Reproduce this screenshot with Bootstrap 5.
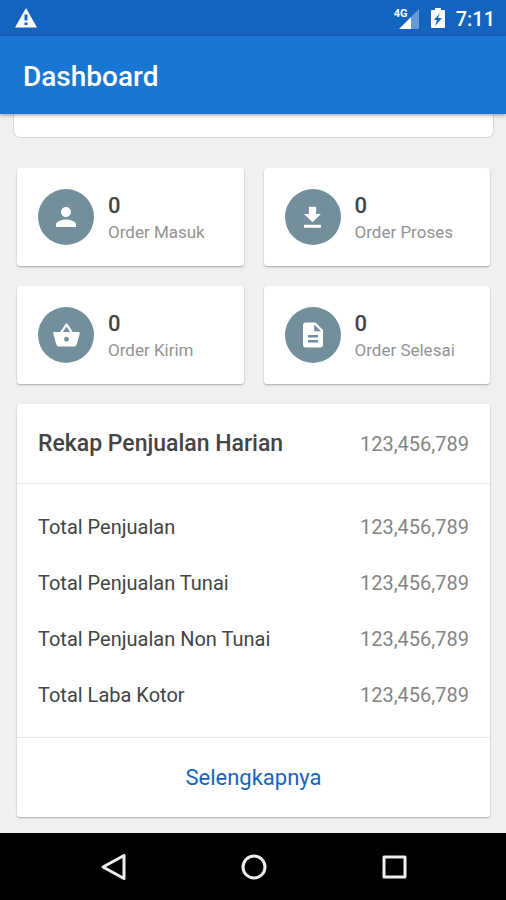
<!DOCTYPE html>
<html lang="id">
<head>
<meta charset="utf-8">
<meta name="viewport" content="width=device-width, initial-scale=1">
<title>Dashboard</title>
<link href="https://cdn.jsdelivr.net/npm/bootstrap@5.3.0/dist/css/bootstrap.min.css" rel="stylesheet">
<style>
  body { font-family: Roboto, "Liberation Sans", sans-serif; background: #f0f0f0; color: #444; }
  svg { display: block; fill: currentColor; }
  .status-bar { background: #1464bf; height: 36px; padding: 0 11px 0 15px; }
  .clock { font-size: 20px; line-height: 24px; font-weight: 500; padding-top: 2px; }
  .signal { width: 26px; height: 21px; }
  .network { font-size: 11px; line-height: 11px; font-weight: 700; top: 0; left: 0; }
  .app-bar { background: #1976d2; height: 78px; padding: 4px 24px 0 23px; box-shadow: 0 1px 4px rgba(0,0,0,.4); }
  .app-title { font-size: 28px; line-height: 32px; font-weight: 500; }
  .banner { height: 24px; margin: 0 12px 30px 13px; background: #fff; border: 1px solid #d8d8d8; border-top: 0; border-radius: 0 0 7px 7px; }
  .content { padding: 0 16px 16px 17px; }
  .tiles { --bs-gutter-x: 20px; --bs-gutter-y: 20px; margin-bottom: 20px; }
  .panel { border: 0; border-radius: 3px; color: inherit; box-shadow: 0 1px 2px rgba(0,0,0,.3); }
  .tile { height: 98px; padding: 0 21px; gap: 14px; }
  .disc { width: 56px; height: 56px; background: #738f9b; }
  .count { font-size: 22px; line-height: 28px; font-weight: 500; padding-top: 2px; }
  .caption { font-size: 17px; line-height: 24px; color: #939393; }
  .recap-head, .recap-foot { padding: 24px 21px; background: none; border-color: #e8e8e8; }
  .recap-title { font-size: 23px; line-height: 31px; font-weight: 500; }
  .amount { font-size: 20px; line-height: 24px; color: #858585; font-weight: 400; }
  .recap-body { padding: 15px 21px 14px; }
  .recap-body th, .recap-body td { padding: 16px 0; font-size: 20px; line-height: 24px; font-weight: 400; }
  .more { font-size: 22px; line-height: 31px; color: #1565c0; }
  .system-nav { background: #000; height: 67px; padding-left: 2px; }
  .system-nav button { width: 140px; }
  .system-nav svg { fill: none; stroke: #eee; stroke-width: 3; stroke-linejoin: round; }
</style>
</head>
<body>
<div class="min-vh-100 d-flex flex-column">
  <div class="status-bar d-flex align-items-center text-white">
    <svg class="me-auto" width="22" height="20" viewBox="0 0 22 20" role="img" aria-label="Peringatan"><path fill-rule="evenodd" d="M11 0 22 19.500H0ZM9.500 6.500v6h3v-6zm0 8v2.500h3v-2.500z"/></svg>
    <div class="signal position-relative">
      <span class="network position-absolute">4G</span>
      <svg width="26" height="21" viewBox="0 0 26 21" aria-hidden="true"><path d="M17 9v12H5z"/><path d="M17 9 25 1v20h-8z" opacity=".35"/></svg>
    </div>
    <svg class="ms-2 me-2" width="20" height="22" viewBox="0 0 20 22" aria-hidden="true"><path fill-rule="evenodd" d="M7 1h6v2h3q1 0 1 1v16q0 1-1 1H4q-1 0-1-1V4q0-1 1-1h3zm5 5-6 7h3l-2 6 7-8h-4z"/></svg>
    <span class="clock">7:11</span>
  </div>
  <header class="app-bar d-flex align-items-center position-relative z-1 text-white">
    <h1 class="app-title mb-0">Dashboard</h1>
  </header>

  <main class="flex-grow-1">
    <div class="banner"></div>
    <div class="content">
      <div class="row tiles row-cols-2">
        <div class="col">
          <div class="card panel tile flex-row align-items-center">
            <div class="disc rounded-circle d-flex align-items-center justify-content-center flex-shrink-0 text-white">
              <svg width="30" height="30" viewBox="0 0 24 24" aria-hidden="true"><path d="M12 12c2.210 0 4-1.790 4-4s-1.790-4-4-4-4 1.790-4 4 1.790 4 4 4zm0 2c-2.670 0-8 1.340-8 4v2h16v-2c0-2.660-5.330-4-8-4z"/></svg>
            </div>
            <div><div class="count">0</div><div class="caption text-nowrap">Order Masuk</div></div>
          </div>
        </div>
        <div class="col">
          <div class="card panel tile flex-row align-items-center">
            <div class="disc rounded-circle d-flex align-items-center justify-content-center flex-shrink-0 text-white">
              <svg width="29" height="29" viewBox="0 0 24 24" aria-hidden="true"><path d="M19 9h-4V3H9v6H5l7 7 7-7zM5 18v2.500h14V18H5z"/></svg>
            </div>
            <div><div class="count">0</div><div class="caption text-nowrap">Order Proses</div></div>
          </div>
        </div>
        <div class="col">
          <div class="card panel tile flex-row align-items-center">
            <div class="disc rounded-circle d-flex align-items-center justify-content-center flex-shrink-0 text-white">
              <svg width="29" height="29" viewBox="0 0 24 24" aria-hidden="true"><path d="M17.210 9l-4.380-6.560c-.19-.28-.51-.42-.83-.42-.32 0-.64.14-.83.43L6.790 9H2c-.55 0-1 .45-1 1 0 .09.010.18.040.27l2.540 9.270c.23.84 1 1.460 1.920 1.460h13c.92 0 1.690-.62 1.930-1.460l2.540-9.270L23 10c0-.55-.45-1-1-1h-4.790zM9 9l3-4.400L15 9H9zm3 8c-1.100 0-2-.9-2-2s.9-2 2-2 2 .9 2 2-.9 2-2 2z"/></svg>
            </div>
            <div><div class="count">0</div><div class="caption text-nowrap">Order Kirim</div></div>
          </div>
        </div>
        <div class="col">
          <div class="card panel tile flex-row align-items-center">
            <div class="disc rounded-circle d-flex align-items-center justify-content-center flex-shrink-0 text-white">
              <svg width="30" height="30" viewBox="0 0 24 24" aria-hidden="true"><path d="M14 2H6c-1.100 0-1.990.9-1.990 2L4 20c0 1.100.89 2 1.990 2H18c1.100 0 2-.9 2-2V8l-6-6zm2 16H8v-2h8v2zm0-4H8v-2h8v2zm-3-5V3.500L18.500 9H13z"/></svg>
            </div>
            <div><div class="count">0</div><div class="caption text-nowrap">Order Selesai</div></div>
          </div>
        </div>
      </div>

      <section class="card panel">
        <div class="card-header recap-head d-flex align-items-center justify-content-between">
          <h2 class="recap-title mb-0">Rekap Penjualan Harian</h2>
          <span class="amount">123,456,789</span>
        </div>
        <div class="recap-body">
          <table class="w-100">
            <tbody>
              <tr><th scope="row">Total Penjualan</th><td class="amount text-end">123,456,789</td></tr>
              <tr><th scope="row">Total Penjualan Tunai</th><td class="amount text-end">123,456,789</td></tr>
              <tr><th scope="row">Total Penjualan Non Tunai</th><td class="amount text-end">123,456,789</td></tr>
              <tr><th scope="row">Total Laba Kotor</th><td class="amount text-end">123,456,789</td></tr>
            </tbody>
          </table>
        </div>
        <div class="card-footer recap-foot text-center">
          <a class="more d-block text-decoration-none" href="#">Selengkapnya</a>
        </div>
      </section>
    </div>
  </main>

  <nav class="system-nav d-flex justify-content-center" aria-label="Navigasi sistem">
    <button type="button" class="btn p-0 border-0 d-flex align-items-center justify-content-center" aria-label="Kembali"><svg width="28" height="28" viewBox="0 0 28 28"><path d="M24 2.500v23L3 14z"/></svg></button>
    <button type="button" class="btn p-0 border-0 d-flex align-items-center justify-content-center" aria-label="Beranda"><svg width="28" height="28" viewBox="0 0 28 28"><circle cx="14" cy="14" r="11"/></svg></button>
    <button type="button" class="btn p-0 border-0 d-flex align-items-center justify-content-center" aria-label="Terbaru"><svg width="28" height="28" viewBox="0 0 28 28"><path d="M4 4h21v20H4z"/></svg></button>
  </nav>
</div>
<script src="https://cdn.jsdelivr.net/npm/bootstrap@5.3.0/dist/js/bootstrap.bundle.min.js"></script>
</body>
</html>
